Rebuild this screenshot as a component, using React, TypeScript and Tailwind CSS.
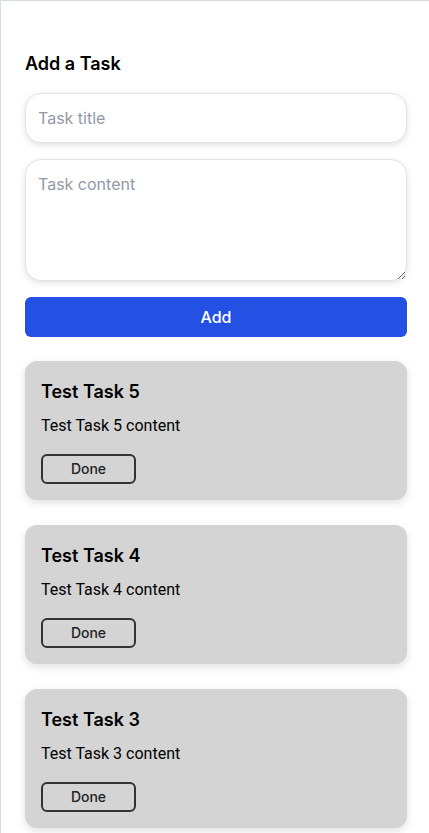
import * as React from "react";

interface Task {
  id: number;
  title: string;
  content: string;
}

const initialTasks: Task[] = [
  { id: 5, title: "Test Task 5", content: "Test Task 5 content" },
  { id: 4, title: "Test Task 4", content: "Test Task 4 content" },
  { id: 3, title: "Test Task 3", content: "Test Task 3 content" },
];

const TaskCard = ({ task, onDone }: { task: Task; onDone: () => void }) => {
  return (
    <div className="rounded-xl bg-[#d4d4d4] px-4 pt-[17px] pb-4 shadow-[0_3px_8px_rgba(0,0,0,0.12)]">
      <h3 className="text-[18px] leading-7 font-semibold text-black">{task.title}</h3>
      <p className="mt-2 text-base leading-6 text-black" style={{ fontFamily: "Roboto, sans-serif" }}>
        {task.content}
      </p>
      <button
        onClick={onDone}
        className="mt-4 h-[30px] w-[95px] rounded-md border-2 border-[#333333] text-sm font-medium text-[#222222]"
      >
        Done
      </button>
    </div>
  );
};

export default function App() {
  const [tasks, setTasks] = React.useState<Task[]>(initialTasks);
  const [title, setTitle] = React.useState("");
  const [content, setContent] = React.useState("");

  const addTask = () => {
    if (!title) return;
    const id = Math.max(0, ...tasks.map((t) => t.id)) + 1;
    setTasks([{ id, title, content }, ...tasks]);
    setTitle("");
    setContent("");
  };

  return (
    <div
      className="min-h-screen border-t border-l border-[#d3dde2] bg-white pt-[49px] pl-6 pr-[22px] pb-6"
      style={{ fontFamily: "Inter, 'Noto Sans', sans-serif" }}
    >
      <h2 className="text-[18px] leading-7 font-semibold text-black">Add a Task</h2>
      <div className="mt-[15px] flex flex-col gap-4">
        <input
          value={title}
          onChange={(e) => setTitle(e.target.value)}
          placeholder="Task title"
          className="h-[50px] rounded-2xl border border-[#e2e4e8] bg-white px-3 text-base text-black shadow-[0_2px_6px_rgba(0,0,0,0.12)] outline-none placeholder:text-[#9299a6]"
        />
        <textarea
          value={content}
          onChange={(e) => setContent(e.target.value)}
          placeholder="Task content"
          className="h-[122px] rounded-2xl border border-[#e2e4e8] bg-white px-3 py-3 text-base leading-6 text-black shadow-[0_2px_6px_rgba(0,0,0,0.12)] outline-none placeholder:text-[#9299a6]"
        />
        <button
          onClick={addTask}
          className="h-10 rounded-md bg-[#2451e4] text-base font-medium text-white"
        >
          Add
        </button>
      </div>
      <div className="mt-6 flex flex-col gap-[25px]">
        {tasks.map((task) => (
          <TaskCard
            key={task.id}
            task={task}
            onDone={() => setTasks(tasks.filter((t) => t.id !== task.id))}
          />
        ))}
      </div>
    </div>
  );
}
